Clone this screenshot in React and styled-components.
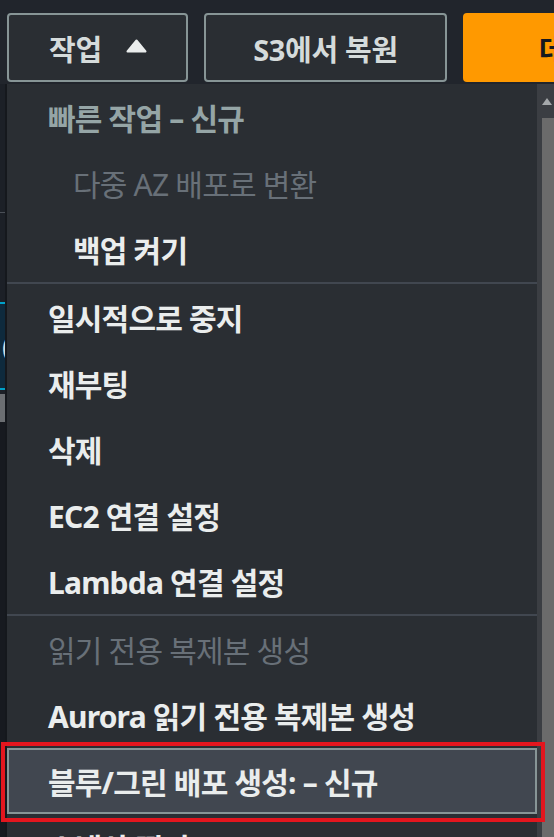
import React from 'react';
import styled, { createGlobalStyle, css } from 'styled-components';

const GlobalStyle = createGlobalStyle`
  html, body { margin: 0; padding: 0; background: #21252c; overflow: hidden; }
  body { font-family: "Noto Sans", "Noto Sans CJK KR", sans-serif; }
  * { box-sizing: border-box; }
`;

const Page = styled.div`
  position: relative;
  width: 554px;
  height: 837px;
  overflow: hidden;
  background: #21252c;
`;

const Toolbar = styled.div`
  display: flex;
  gap: 16px;
  padding: 13px 0 0 7px;
  height: 84px;
  white-space: nowrap;
`;

const Button = styled.div`
  flex: none;
  display: flex;
  align-items: center;
  gap: 24px;
  height: 69px;
  width: ${p => p.$width}px;
  padding: 0 ${p => p.$pad ?? 40}px;
  justify-content: ${p => (p.$center ? 'center' : 'flex-start')};
  border: 2px solid ${p => (p.$primary ? '#ff9900' : '#879596')};
  border-radius: 4px;
  background: ${p => (p.$primary ? '#ff9900' : '#2a2e33')};
  color: ${p => (p.$primary ? '#16191f' : '#d5dbdb')};
  font-size: 29px;
  font-weight: 700;
  letter-spacing: -0.3px;
  overflow: hidden;
`;

const Caret = styled.svg`
  width: 21px;
  height: 14px;
  flex: none;
  margin-top: -4px;
`;

const Backdrop = styled.div`
  display: flex;
  flex-direction: column;
  background: #1c2027;
  height: 753px;
`;

const BackRow = styled.div`
  flex: none;
  height: ${p => p.$h}px;
  background: ${p => p.$bg || 'transparent'};
  border-top: ${p => (p.$line ? `${p.$lineW || 1}px solid ${p.$line}` : 'none')};
  border-bottom: ${p => (p.$lineB ? `2px solid ${p.$lineB}` : 'none')};
  color: #d5dbdb;
  font-size: 28px;
  display: flex;
  align-items: center;
  padding-left: 2px;
`;

const Menu = styled.div`
  position: absolute;
  left: 7px;
  top: 84px;
  right: 0;
  bottom: 0;
  display: flex;
  background: #2a2e33;
  box-shadow: -2px 0 0 #15181d;
`;

const List = styled.ul`
  flex: 1;
  list-style: none;
  margin: 0;
  padding: 0;
  min-width: 0;
`;

const Separator = styled.li`
  height: 2px;
  background: #414750;
`;

const Item = styled.li`
  position: relative;
  display: flex;
  align-items: center;
  height: 66px;
  padding-left: ${p => (p.$indent ? 66 : 41)}px;
  font-size: 30px;
  letter-spacing: -0.8px;
  font-weight: ${p => (p.$kind === 'disabled' ? 400 : 700)};
  color: ${p =>
    p.$kind === 'disabled' ? '#687078' : p.$kind === 'header' ? '#95a5a6' : '#eaeded'};
  white-space: nowrap;
  ${p =>
    p.$highlighted &&
    css`
      background: #414750;
      border: 2px solid #879596;
      padding-left: 39px;
      z-index: 2;
      &::after {
        content: '';
        position: absolute;
        top: -8px;
        bottom: -10px;
        left: -8px;
        right: -10px;
        border: 4px solid #e3161e;
        pointer-events: none;
      }
    `}
`;

const Scrollbar = styled.div`
  flex: none;
  width: 17px;
  display: flex;
  flex-direction: column;
  background: #3b3e43;
`;

const ScrollArrow = styled.div`
  height: 34px;
  display: flex;
  align-items: center;
  justify-content: flex-end;
  padding-right: 2px;
`;

const Thumb = styled.div`
  flex: 1;
  margin-left: 5px;
  background: #6b6b6b;
`;

const items = [
  { label: '빠른 작업 – 신규', kind: 'header' },
  { label: '다중 AZ 배포로 변환', kind: 'disabled', indent: true },
  { label: '백업 켜기', indent: true },
  { sep: true },
  { label: '일시적으로 중지' },
  { label: '재부팅' },
  { label: '삭제' },
  { label: 'EC2 연결 설정' },
  { label: 'Lambda 연결 설정' },
  { sep: true },
  { label: '읽기 전용 복제본 생성', kind: 'disabled' },
  { label: 'Aurora 읽기 전용 복제본 생성' },
  { label: '블루/그린 배포 생성: – 신규', highlighted: true },
  { label: '스냅샷 찍기' },
];

export default function App() {
  return (
    <>
      <GlobalStyle />
      <Page>
        <Toolbar>
          <Button $width={181}>
            작업
            <Caret viewBox="0 0 21 14">
              <path d="M10.5 1.5 L19.5 12.5 L1.5 12.5 Z" fill="#eaeded" stroke="#eaeded" strokeWidth="2" strokeLinejoin="round" />
            </Caret>
          </Button>
          <Button $width={243} $center $pad={0}>S3에서 복원</Button>
          <Button $width={300} $primary $pad={74}>데이터베이스 생성</Button>
        </Toolbar>
        <Backdrop>
          <BackRow $h={128} />
          <BackRow $h={90} $line="#4a4f57" />
          <BackRow $h={88} $bg="#0e2a3d" $line="#00a1c9" $lineW={2} $lineB="#00a1c9">(</BackRow>
          <BackRow $h={4} />
          <BackRow $h={28} $bg="#6b6e72" />
          <BackRow $h={415} $bg="#171a20" />
        </Backdrop>
        <Menu>
          <List>
            {items.map((it, i) =>
              it.sep ? (
                <Separator key={i} />
              ) : (
                <Item key={i} $kind={it.kind} $indent={it.indent} $highlighted={it.highlighted}>
                  {it.label}
                </Item>
              )
            )}
          </List>
          <Scrollbar>
            <ScrollArrow>
              <svg width="10" height="7" viewBox="0 0 10 7">
                <path d="M5 0 L10 7 L0 7 Z" fill="#a5a8ab" />
              </svg>
            </ScrollArrow>
            <Thumb />
          </Scrollbar>
        </Menu>
      </Page>
    </>
  );
}
